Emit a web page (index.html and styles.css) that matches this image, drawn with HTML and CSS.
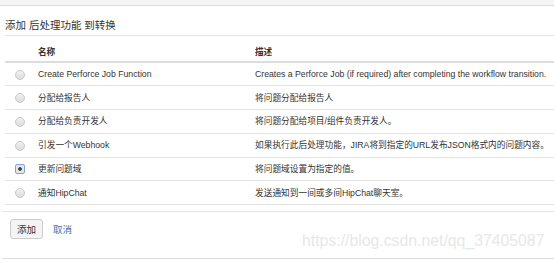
FILE: index.html
```html
<!DOCTYPE html>
<html lang="zh-CN">
<head>
    <meta charset="UTF-8">
    <title>添加 后处理功能 到转换</title>
    <link rel="stylesheet" href="styles.css">
</head>
<body>
    <div class="topbar"></div>
    <div class="page">
        <h2 class="title">添加 后处理功能 到转换</h2>
        <table class="functions">
            <thead>
                <tr>
                    <th class="col-radio"></th>
                    <th class="col-name">名称</th>
                    <th class="col-desc">描述</th>
                </tr>
            </thead>
            <tbody>
                <tr>
                    <td><span class="radio"></span></td>
                    <td>Create Perforce Job Function</td>
                    <td>Creates a Perforce Job (if required) after completing the workflow transition.</td>
                </tr>
                <tr>
                    <td><span class="radio"></span></td>
                    <td>分配给报告人</td>
                    <td>将问题分配给报告人</td>
                </tr>
                <tr>
                    <td><span class="radio"></span></td>
                    <td>分配给负责开发人</td>
                    <td>将问题分配给项目/组件负责开发人。</td>
                </tr>
                <tr>
                    <td><span class="radio"></span></td>
                    <td>引发一个Webhook</td>
                    <td>如果执行此后处理功能，JIRA将到指定的URL发布JSON格式内的问题内容。</td>
                </tr>
                <tr>
                    <td><span class="radio checked"></span></td>
                    <td>更新问题域</td>
                    <td>将问题域设置为指定的值。</td>
                </tr>
                <tr>
                    <td><span class="radio"></span></td>
                    <td>通知HipChat</td>
                    <td>发送通知到一间或多间HipChat聊天室。</td>
                </tr>
            </tbody>
        </table>
        <div class="actions">
            <button class="btn">添加</button>
            <a href="#" class="cancel">取消</a>
        </div>
    </div>
    <div class="watermark">https://blog.csdn.net/qq_37405087</div>
</body>
</html>
```

FILE: styles.css
```css
body {
    margin: 0;
    font-family: "Liberation Sans", Arial, "Noto Sans CJK SC", sans-serif;
    color: #333;
    background: #fff;
    overflow: hidden;
}
.topbar {
    height: 5px;
    background: #f5f5f5;
    border-bottom: 1px solid #ddd;
}
.page {
    padding-left: 5px;
}
.title {
    margin: 0;
    padding: 12px 0 3px;
    font-size: 10.5px;
    font-weight: normal;
    line-height: 14px;
    border-bottom: 1px solid #e6e6e6;
}
.functions {
    width: 549px;
    border-collapse: collapse;
    table-layout: fixed;
    font-size: 8.7px;
}
.functions th {
    text-align: left;
    font-weight: bold;
    font-size: 8.6px;
    height: 26px;
    padding: 5px 0 0 5px;
    box-sizing: border-box;
    border-bottom: 2px solid #ddd;
}
.functions th.col-radio { width: 28px; padding: 0; }
.functions th.col-name { width: 217px; }
.functions td {
    height: 23.8px;
    padding: 0 0 1px 5px;
    box-sizing: border-box;
    white-space: nowrap;
    border-bottom: 1px solid #e3e3e3;
}
.functions td:first-child {
    padding: 0;
    text-align: center;
}
.radio {
    display: inline-block;
    width: 8px;
    height: 8px;
    border: 1px solid #c8c8c8;
    border-radius: 50%;
    background: linear-gradient(#f2f2f2, #dcdcdc);
    vertical-align: middle;
    margin-left: 1px;
}
.radio.checked {
    border-radius: 2px;
    border-color: #7aa7e0;
    background: radial-gradient(circle, #444 0, #444 1.5px, #e6e6e6 2.2px);
}
.actions {
    margin: 6px 0 0 -3px;
    padding: 7px 0 19px 8px;
    border-top: 1px solid #e6e6e6;
    border-bottom: 1px solid #ddd;
    display: flex;
    align-items: center;
    gap: 10px;
}
.btn {
    font-family: inherit;
    font-size: 9.5px;
    color: #333;
    background: #f4f4f4;
    border: 1px solid #ccc;
    border-radius: 3px;
    width: 33px;
    height: 20px;
    padding: 0;
}
.cancel {
    font-size: 9.5px;
    color: #3b73af;
    text-decoration: none;
}
.watermark {
    position: absolute;
    left: 302px;
    top: 232px;
    font-size: 15.8px;
    color: #e8e8e8;
    white-space: nowrap;
}
```
